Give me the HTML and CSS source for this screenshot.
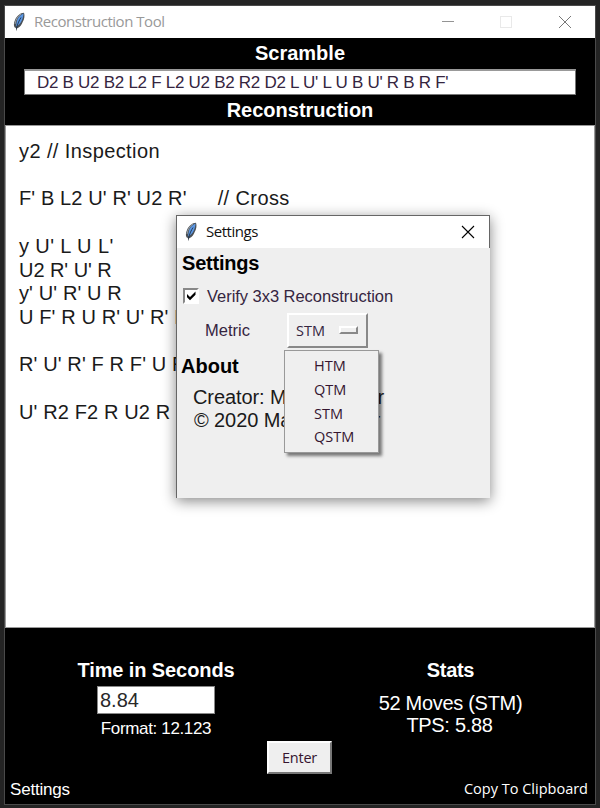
FILE: index.html
```html
<!DOCTYPE html>
<html lang="en">
<head>
<meta charset="utf-8">
<title>Reconstruction Tool</title>
<link rel="stylesheet" href="styles.css">
</head>
<body>
<svg class="defs" width="0" height="0">
  <symbol id="feather" viewBox="0 0 12 20">
    <path d="M11 .7C7.500.700 3.500 4 2 8c-1.200 2.700-1.500 5.300-.5 7.300l1.400.8.300 3.200 1-3.100c2.800-1 4.700-3.500 5.600-6.400C11.400 7 12 3.500 11 .7z" fill="#4a5056"/>
    <path d="M10.400 1.500C7 3 4.300 6 3.800 9.500L3 14.500C6.700 12.700 8.900 9.500 9.700 6 10.100 4 10.700 2.800 10.400 1.500z" fill="#5b97e4"/>
    <path d="M8 2C5 3.800 2.700 7.400 2 12" fill="none" stroke="#9aa0a5" stroke-width="1"/>
    <path d="M8 5.500C6.500 8 4.500 11.500 3.500 16.500" fill="none" stroke="#1c3047" stroke-width=".9"/>
  </symbol>
</svg>
<main class="window">
  <header class="titlebar">
    <svg class="feather"><use href="#feather"/></svg>
    <span class="caption">Reconstruction Tool</span>
    <svg class="controls" width="132" height="14" viewBox="0 0 132 14" shape-rendering="crispEdges">
      <path d="M0 6.500h12" stroke="#949494"/>
      <rect x="58.500" y="1.500" width="11" height="11" fill="none" stroke="#e9e9e9"/>
      <path d="M117 1l12 12M129 1l-12 12" stroke="#777" shape-rendering="auto"/>
    </svg>
  </header>
  <section class="top">
    <h2>Scramble</h2>
    <div class="scramble"><span>D2 B U2 B2 L2 F L2 U2 B2 R2 D2 L U' L U B U' R B R F'</span></div>
    <h2>Reconstruction</h2>
  </section>
  <section class="editor"><pre><span class="wide">y2 // Inspection</span>

F' B L2 U' R' U2 R'<span class="gap">     </span><span class="wide">// Cross</span>

<span class="wide">y U' L U L'</span>
<span class="tight">U2 R' U' R</span>
y' U' R' U R
U F' R U R' U' R' F R

R' U' R' F R F' U R

U' R2 F2 R U2 R U2 R</pre></section>
  <section class="bottom">
    <div class="columns">
      <div class="time">
        <h2>Time in Seconds</h2>
        <div class="entry"><span>8.84</span></div>
        <p class="format">Format: 12.123</p>
      </div>
      <div class="stats">
        <h2>Stats</h2>
        <p>52 Moves (STM)</p>
        <p class="tps">TPS: 5.88</p>
      </div>
    </div>
    <div class="enter">Enter</div>
    <footer><span class="settings-link">Settings</span><span class="copy">Copy To Clipboard</span></footer>
  </section>
</main>
<section class="dialog">
  <header class="dialog-title">
    <svg class="feather"><use href="#feather"/></svg>
    <span class="caption">Settings</span>
    <svg class="close" width="14" height="14"><path d="M1 1l12 12M13 1L1 13" stroke="#000" stroke-width="1.100"/></svg>
  </header>
  <div class="dialog-body">
    <h2>Settings</h2>
    <div class="verify">
      <span class="check"><svg width="12" height="12"><path d="M2 4v3.200l3 3 5.500-5.500V1.500L5 7z" fill="#000"/></svg></span>
      <span class="verify-label">Verify 3x3 Reconstruction</span>
    </div>
    <div class="metric"><span class="metric-label">Metric</span><div class="option"><span>STM</span><i></i></div></div>
    <h2 class="about">About</h2>
    <div class="credits">
      <p class="credit-row"><span>Creator: M</span><span>r</span></p>
      <p class="credit-row second"><span>© 2020 Ma</span><span>r</span></p>
    </div>
  </div>
  <div class="menu"><div>HTM</div><div>QTM</div><div>STM</div><div>QSTM</div></div>
</section>
</body>
</html>
```
FILE: styles.css
```css
* { box-sizing: border-box; }
body {
  margin: 0; width: 600px; height: 808px; padding: 5px 4px 3px 4px;
  background: #242424; position: relative; overflow: hidden;
  font-family: "Liberation Sans", Arial, sans-serif; color: #1a1a1a;
}
h2, p, pre { margin: 0; font-family: inherit; }
h2 { font-size: 20px; line-height: 24px; font-weight: bold; }
.defs { display: block; position: absolute; }
.window {
  width: 592px; height: 800px; border: 1px solid #4a4a4a;
  display: flex; flex-direction: column; background: #000;
}
.titlebar { height: 32px; flex: none; background: #fff; display: flex; align-items: center; }
.feather { width: 12px; height: 20px; flex: none; margin-left: 8px; }
.caption {
  font-family: "Open Sans", "Noto Sans", sans-serif; font-size: 15px; line-height: 20px;
  letter-spacing: -.47px;
  margin: -2px 0 0 9px; color: #999; white-space: nowrap;
}
.controls { margin-left: auto; margin-right: 21px; }
.top { height: 87px; flex: none; color: #fff; text-align: center; padding-top: 3px; }
.scramble {
  width: 552px; height: 26px; margin: 4px 0 3px 19px; background: #fff;
  border: 1px solid #777; border-top-width: 2px; border-top-color: #999;
  color: #35253f; text-align: left; padding-left: 12px;
  font-size: 17px; line-height: 23px; letter-spacing: -.28px; white-space: nowrap;
}
.editor {
  height: 503px; flex: none; background: #fff; border: 1px solid #999;
  padding: 14px 0 0 13px; overflow: hidden;
}
.editor pre { font-size: 20px; line-height: 23.7px; letter-spacing: .12px; }
.gap { letter-spacing: .65px; }
.wide { letter-spacing: .4px; }
.tight { letter-spacing: -.05px; }
.bottom { flex: 1; color: #fff; display: flex; flex-direction: column; }
.columns { display: flex; height: 112px; padding-top: 30px; }
.time { width: 302px; text-align: center; }
.stats { width: 287px; text-align: center; }
.time h2 { letter-spacing: -.1px; }
.stats h2 { letter-spacing: -.3px; }
.entry {
  width: 118px; height: 28px; margin: 4px 0 0 92px; background: #fff; border: 1px solid #888;
  padding-left: 2px; color: #292929; font-size: 20px; line-height: 27px; text-align: left;
}
.format { font-size: 17px; line-height: 29px; letter-spacing: -.35px; }
.stats p { font-size: 20px; line-height: 22px; margin-top: 10px; letter-spacing: -.3px; }
.stats p.tps { margin-top: 0; margin-left: -2px; }
.enter {
  width: 65px; height: 33px; margin: 1px 0 0 262px; background: #efefef;
  border: 2px solid; border-color: #fff #777 #777 #fff;
  color: #35152f; font: 14.500px/29px "Open Sans", "Noto Sans", sans-serif; letter-spacing: -.2px; text-align: center;
}
footer { display: flex; justify-content: space-between; padding: 5px 7px 0 5px; line-height: 22px; }
.settings-link { font-size: 17px; letter-spacing: -.2px; }
.copy { font: 14.500px/20px "Open Sans", "Noto Sans", sans-serif; }
.dialog {
  position: absolute; left: 176px; top: 215px; width: 314px; height: 283px;
  background: #efefef; border-left: 1px solid #666; border-top: 1px solid #666;
  box-shadow: 0 3px 13px rgba(0,0,0,.48);
}
.dialog-title { height: 32px; background: #fff; display: flex; align-items: center; border-right: 1px solid #666; }
.dialog-title .caption { color: #111; }
.dialog-title .close { margin-left: auto; margin-right: 14px; }
.dialog-body h2 { padding-left: 5px; color: #000; padding-top: 3px; height: 37px; letter-spacing: -.2px; }
.verify { display: flex; height: 22px; align-items: center; padding-left: 6px; }
.check {
  width: 16px; height: 16px; border: 2px solid; border-color: #888 #fff #fff #888; background: #fff;
  display: flex;
}
.verify-label { margin-left: 8px; font-size: 16.500px; letter-spacing: -.04px; color: #35253f; white-space: nowrap; }
.metric { display: flex; align-items: center; height: 46px; color: #35253f; font-size: 16.500px; }
.metric-label { width: 110px; padding: 1px 0 0 28px; }
.option {
  width: 81px; height: 35px; border: 2px solid; border-color: #fff #888 #888 #fff;
  padding: 0 8px 0 7px; display: flex; align-items: center; justify-content: space-between;
  font: 14.500px "Open Sans", "Noto Sans", sans-serif;
}
.option i { width: 19px; height: 8px; border: 2px solid; border-color: #fff #888 #888 #fff; }
.dialog-body .about { height: 33px; padding-left: 4px; padding-top: 1px; letter-spacing: 0; }
.credits { padding-left: 16px; font-size: 20px; line-height: 22.500px; letter-spacing: -.1px; }
.credit-row { display: flex; width: 191px; justify-content: space-between; white-space: nowrap; }
.second { padding-left: 1px; width: 187px; }
.menu {
  position: absolute; left: 107px; top: 134px; width: 95px; height: 103px; background: #efefef;
  border: 1px solid #999; box-shadow: 3px 3px 3px rgba(0,0,0,.5);
  padding: 3px 0 0 29px; font: 14.500px/23.800px "Open Sans", "Noto Sans", sans-serif; color: #35152f;
}
```
